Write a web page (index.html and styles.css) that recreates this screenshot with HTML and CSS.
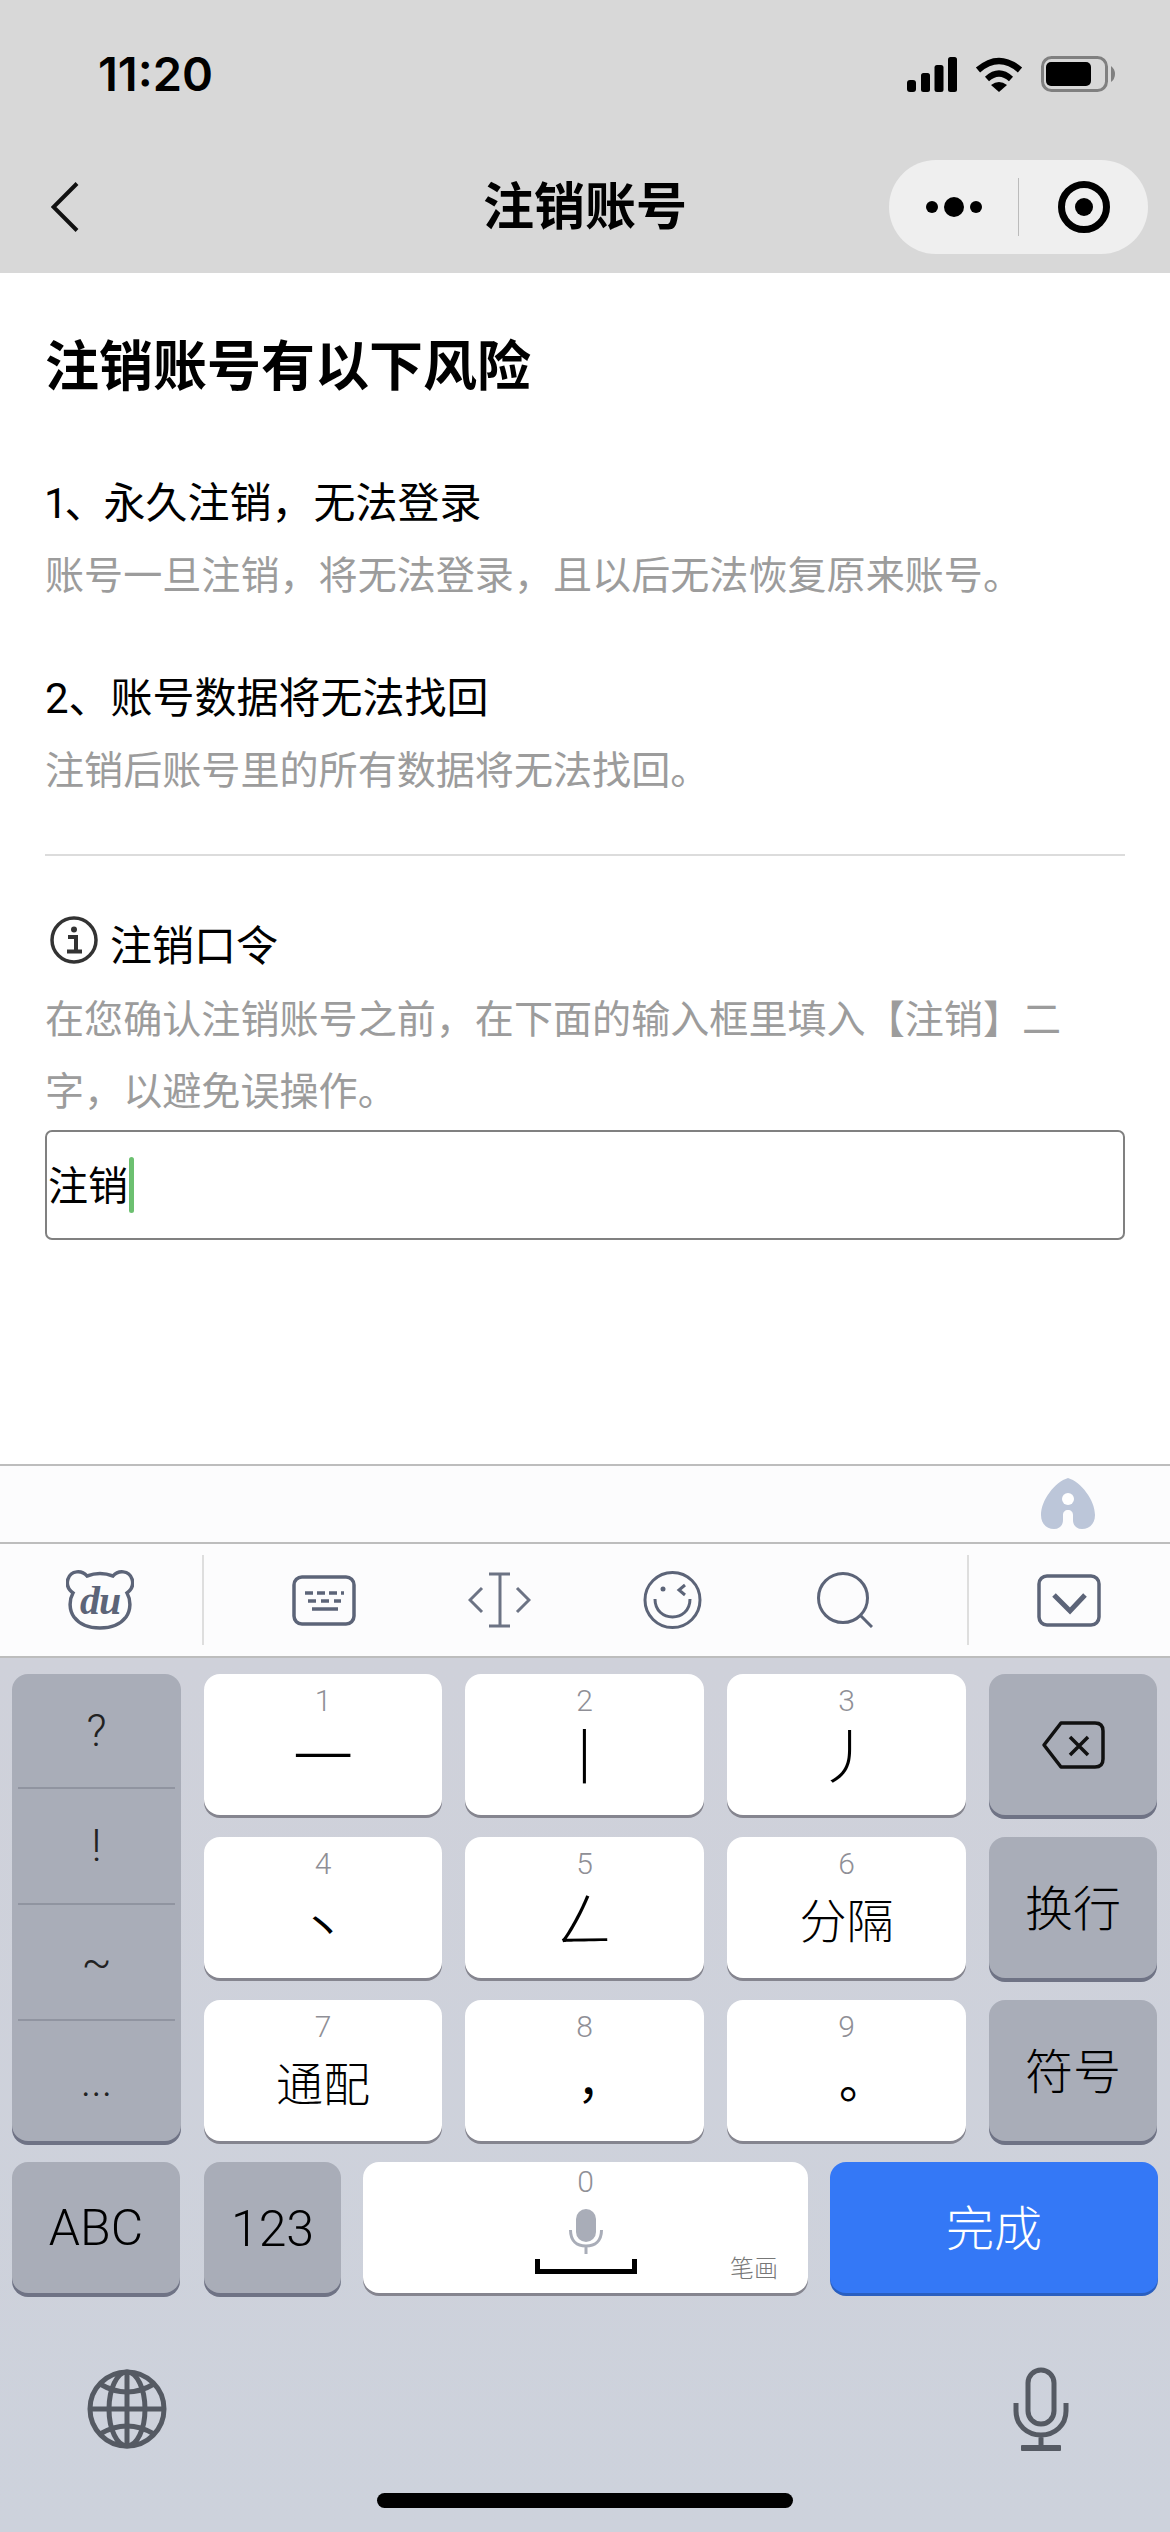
FILE: index.html
```html
<!DOCTYPE html>
<html lang="zh-CN">
<head>
    <meta charset="UTF-8">
    <meta name="viewport" content="width=device-width, initial-scale=1.0">
    <title>注销账号</title>
    <link rel="stylesheet" href="styles.css">
</head>
<body>
    <header class="top">
        <div class="status">
            <span class="time">11:20</span>
            <div class="status-icons">
                <svg width="50" height="35" viewBox="0 0 50 35"><rect x="0" y="23" width="9" height="12" rx="3"/><rect x="14" y="16" width="9" height="19" rx="2.5"/><rect x="27.5" y="8" width="9" height="27" rx="2.5"/><rect x="41" y="0" width="9" height="35" rx="2.5"/></svg>
                <svg width="48" height="36" viewBox="0 0 48 36"><path d="M3 14 Q24 -4 45 14" fill="none" stroke="#000" stroke-width="6.5"/><path d="M12 23 Q24 12 36 23" fill="none" stroke="#000" stroke-width="6"/><path d="M16 29 Q24 23 32 29 L24 36Z"/></svg>
                <svg width="74" height="36" viewBox="0 0 74 36"><rect x="1.5" y="1.5" width="64" height="33" rx="9" fill="none" stroke="#808080" stroke-width="3"/><rect x="5" y="6" width="45" height="24" rx="5"/><path d="M70 10 Q74 13 74 18 Q74 23 70 26Z" fill="#808080"/></svg>
            </div>
        </div>
        <div class="nav">
            <svg class="back" width="28" height="50" viewBox="0 0 28 50"><path d="M26 1.5 L2.5 25 L26 48.5" fill="none" stroke="#111" stroke-width="4"/></svg>
            <div class="nav-title">注销账号</div>
            <div class="capsule">
                <div class="capsule-side">
                    <svg width="56" height="20" viewBox="0 0 56 20"><circle cx="6" cy="10" r="6"/><circle cx="28" cy="10" r="10"/><circle cx="50" cy="10" r="6"/></svg>
                </div>
                <div class="capsule-line"></div>
                <div class="capsule-side">
                    <svg width="52" height="52" viewBox="0 0 52 52"><circle cx="26" cy="26" r="22.5" fill="none" stroke="#000" stroke-width="7"/><circle cx="26" cy="26" r="9"/></svg>
                </div>
            </div>
        </div>
    </header>

    <main>
        <h1>注销账号有以下风险</h1>
        <section class="risk">
            <p class="risk-name"><span class="tight">1、</span>永久注销，无法登录</p>
            <p class="hint">账号一旦注销，将无法登录，且以后无法恢复原来账号。</p>
        </section>
        <section class="risk">
            <p class="risk-name">2、账号数据将无法找回</p>
            <p class="hint">注销后账号里的所有数据将无法找回。</p>
        </section>
        <hr class="divider">
        <div class="pass-title">
            <svg width="48" height="48" viewBox="0 0 48 48"><circle cx="24" cy="24" r="22" fill="none" stroke="#333" stroke-width="3.5"/><circle cx="24" cy="13.5" r="3" fill="#333"/><path d="M18 21 H26 V35 M17 35.5 H32" fill="none" stroke="#333" stroke-width="4"/></svg>
            <span>注销口令</span>
        </div>
        <p class="hint pass-hint">在您确认注销账号之前，在下面的输入框里填入【注销】二字，以避免误操作。</p>
        <div class="input-box">注销<span class="caret"></span></div>
    </main>

    <section class="keyboard">
        <div class="suggest">
            <svg width="54" height="51" viewBox="0 0 54 51"><path d="M27 0 C40 4 54 22 54 37 C54 46 48 51 41 51 C35 51 32 47 32 42 V37 C32 34 30 32 27 32 C24 32 22 34 22 37 V42 C22 47 19 51 13 51 C6 51 0 46 0 37 C0 22 14 4 27 0Z" fill="#bcc6d9"/><circle cx="27" cy="21" r="6" fill="#fff"/></svg>
        </div>
        <div class="tools">
            <svg width="68" height="60" viewBox="0 0 68 60"><path d="M21 6 C16 0 5 0 2 9 C0 15 3 20 7 23 C3 30 3 40 8 47 C14 55 24 58 34 58 C44 58 54 55 60 47 C65 40 65 30 61 23 C65 20 68 15 66 9 C63 0 52 0 47 6 C39 3 29 3 21 6Z" fill="none" stroke="#5c6478" stroke-width="3.5"/><text x="34" y="44" text-anchor="middle" class="du-text">du</text></svg>
            <div class="tool-line line-left"></div>
            <div class="tool-mid">
                <svg width="64" height="51" viewBox="0 0 64 51"><rect x="2" y="2" width="60" height="47" rx="8" fill="none" stroke="#5c6478" stroke-width="3.5"/><path d="M13 18 H21 M25 18 H33 M37 18 H45 M49 18 H52 M16 26 H24 M29 26 H37 M42 26 H49 M20 34 H46" stroke="#5c6478" stroke-width="3.5"/></svg>
                <svg width="63" height="56" viewBox="0 0 63 56"><path d="M21 2 H42 M21 54 H42 M32 2 V54" stroke="#6c7384" stroke-width="3" fill="none"/><path d="M14 16 L2 28 L14 40 M49 16 L61 28 L49 40" stroke="#6c7384" stroke-width="3" fill="none"/></svg>
                <svg width="59" height="58" viewBox="0 0 59 58"><circle cx="29.5" cy="29" r="27.5" fill="none" stroke="#5c6478" stroke-width="3"/><circle cx="20" cy="18" r="2.5" fill="#5c6478"/><path d="M42 14 L36 19 L42 24 M12 28 C12 52 47 52 47 28" fill="none" stroke="#5c6478" stroke-width="3"/></svg>
                <svg class="tool-search" width="56" height="56" viewBox="0 0 56 56"><circle cx="26" cy="26" r="24.5" fill="none" stroke="#5c6478" stroke-width="3"/><path d="M44 44 L55 55" stroke="#5c6478" stroke-width="3"/></svg>
            </div>
            <div class="tool-line"></div>
            <svg class="tool-box" width="64" height="53" viewBox="0 0 64 53"><rect x="2" y="2" width="60" height="49" rx="8" fill="none" stroke="#5c6478" stroke-width="3.5"/><path d="M17 21 L33 37 L48 21" fill="none" stroke="#5c6478" stroke-width="5"/></svg>
        </div>
        <div class="keys">
            <div class="key-grid">
                <div class="key dark side-keys">
                    <span>?</span>
                    <span>!</span>
                    <span>~</span>
                    <span>...</span>
                </div>
                <div class="key num-key"><span class="num">1</span><span class="glyph">一</span></div>
                <div class="key num-key"><span class="num">2</span><span class="glyph">丨</span></div>
                <div class="key num-key"><span class="num">3</span><span class="glyph">丿</span></div>
                <div class="key dark center-key">
                    <svg width="64" height="48" viewBox="0 0 64 48"><path d="M20 2 H54 Q62 2 62 10 V38 Q62 46 54 46 H20 L3 24 Z" fill="none" stroke="#111" stroke-width="3.5" stroke-linejoin="round"/><path d="M29 16 L47 34 M47 16 L29 34" stroke="#111" stroke-width="3.5"/></svg>
                </div>
                <div class="key num-key"><span class="num">4</span><span class="glyph dot">丶</span></div>
                <div class="key num-key"><span class="num">5</span><span class="glyph">ㄥ</span></div>
                <div class="key num-key"><span class="num">6</span><span class="glyph word">分隔</span></div>
                <div class="key dark center-key word-key">换行</div>
                <div class="key num-key"><span class="num">7</span><span class="glyph word">通配</span></div>
                <div class="key num-key"><span class="num">8</span><span class="glyph word punct">，</span></div>
                <div class="key num-key"><span class="num">9</span><span class="glyph word punct">。</span></div>
                <div class="key dark center-key word-key">符号</div>
            </div>
            <div class="key-row">
                <div class="key dark center-key latin abc">ABC</div>
                <div class="key dark center-key latin n123">123</div>
                <div class="key space">
                    <span class="num">0</span>
                    <svg class="space-mic" width="34" height="45" viewBox="0 0 34 45"><rect x="7" y="0" width="20" height="33" rx="10" fill="#a9adb8"/><path d="M1.5 21 C1.5 32 8 37 17 37 C26 37 32.5 32 32.5 21 M17 37 V45" fill="none" stroke="#a9adb8" stroke-width="3"/></svg>
                    <svg class="space-mark" width="102" height="15" viewBox="0 0 102 15"><path d="M2.5 0 V12.5 H99.5 V0" fill="none" stroke="#000" stroke-width="5"/></svg>
                    <span class="stroke-label">笔画</span>
                </div>
                <div class="key done center-key word-key">完成</div>
            </div>
            <div class="sys-row">
                <svg width="80" height="80" viewBox="0 0 80 80"><g fill="none" stroke="#555a63" stroke-width="5"><circle cx="40" cy="40" r="37"/><ellipse cx="40" cy="40" rx="18" ry="37"/><path d="M40 3 V77 M3 40 H77"/><path d="M13 15 Q40 31 67 15 M13 65 Q40 49 67 65"/></g></svg>
                <svg width="56" height="84" viewBox="0 0 56 84"><g fill="none" stroke="#555a63" stroke-width="5"><rect x="15" y="3" width="26" height="54" rx="13"/><path d="M3 36 V44 C3 58 14 68 28 68 C42 68 53 58 53 44 V36 M28 68 V80"/></g><rect x="8" y="78" width="40" height="6" rx="1" fill="#555a63"/></svg>
            </div>
            <div class="home-bar"></div>
        </div>
    </section>
</body>
</html>
```

FILE: styles.css
```css
* {
    box-sizing: border-box;
}
body {
    margin: 0;
    width: 1170px;
    height: 2532px;
    display: flex;
    flex-direction: column;
    background-color: #fff;
    color: #000;
    font-family: Roboto, "Noto Sans CJK SC", sans-serif;
    overflow: hidden;
}
svg {
    display: block;
    flex: none;
}

/* top bar */
.top {
    height: 273px;
    flex: none;
    background-color: #d8d8d8;
}
.status {
    height: 148px;
    padding: 50px 55px 0 98px;
    display: flex;
    justify-content: space-between;
    align-items: flex-start;
}
.time {
    font-family: Inter, sans-serif;
    font-size: 47px;
    font-weight: 600;
    line-height: 48px;
}
.status-icons {
    display: flex;
    align-items: center;
    gap: 18px;
    margin-top: 6px;
}
.nav {
    height: 125px;
    padding: 12px 22px 0;
    display: grid;
    grid-template-columns: 1fr auto 1fr;
    align-items: start;
}
.back {
    margin: 22px 0 0 29px;
}
.nav-title {
    font-size: 51px;
    font-weight: 700;
    line-height: 96px;
}
.capsule {
    justify-self: end;
    width: 259px;
    height: 94px;
    border-radius: 47px;
    background-color: #efefef;
    display: flex;
    align-items: center;
}
.capsule-side {
    flex: 1;
    display: flex;
    justify-content: center;
}
.capsule-line {
    width: 1px;
    height: 58px;
    background-color: #bbb;
}

/* content */
main {
    flex: 1;
    padding: 65px 45px 0;
}
h1 {
    margin: 0 0 70px;
    font-size: 54px;
    font-weight: 700;
    line-height: 60px;
}
p {
    margin: 0;
}
.risk {
    margin-bottom: 51px;
}
.risk-name {
    font-size: 42px;
    line-height: 72px;
}
.tight {
    margin-left: -1px;
    letter-spacing: -3px;
}
.hint {
    font-size: 39.1px;
    line-height: 72px;
    color: #9c9c9c;
}
.divider {
    margin: -4px 0 55px;
    border: none;
    height: 2px;
    background-color: #dcdcdc;
}
.pass-title {
    display: flex;
    align-items: flex-start;
    gap: 12px;
    padding-left: 5px;
    font-size: 42px;
    line-height: 72px;
}
.pass-title svg {
    margin-top: 5px;
}
.pass-hint {
    padding: 1px 0 2px;
}
.input-box {
    height: 110px;
    padding: 0 0 4px 1px;
    display: flex;
    align-items: center;
    border: 2px solid #808080;
    border-radius: 7px;
    font-size: 40px;
}
.caret {
    width: 5px;
    height: 56px;
    margin: 3px 0 0 1px;
    border-radius: 3px;
    background-color: #6cc070;
}

/* keyboard */
.keyboard {
    height: 1068px;
    flex: none;
    display: flex;
    flex-direction: column;
}
.suggest {
    height: 78px;
    padding: 12px 75px 0 0;
    display: flex;
    justify-content: flex-end;
    border-top: 2px solid #bdbdbd;
    background-color: #fcfcfd;
}
.tools {
    height: 116px;
    padding: 0 69px 0 66px;
    display: flex;
    align-items: center;
    border-top: 2px solid #bdbdbd;
    border-bottom: 2px solid #bdbdbd;
    background-color: #fcfcfd;
}
.du-text {
    font-family: "Liberation Serif", serif;
    font-size: 40px;
    font-style: italic;
    font-weight: 700;
    letter-spacing: -1px;
    fill: #5c6478;
}
.tool-line {
    width: 2px;
    height: 90px;
    background-color: #dedede;
}
.line-left {
    margin-left: 68px;
}
.tool-mid {
    flex: 1;
    margin: 0 0 0 88px;
    display: flex;
    align-items: center;
    gap: 112px;
}
.tool-search {
    margin-left: 3px;
}
.tool-box {
    margin-left: 68px;
}
.keys {
    flex: 1;
    padding: 16px 12px 0;
    background: linear-gradient(#cfd1da, #cdd2dc);
}
.key-grid {
    display: grid;
    grid-template-columns: 169px 238px 239px 239px 168px;
    grid-template-rows: 141px 141px 141px;
    column-gap: 23px;
    row-gap: 22px;
}
.key {
    border-radius: 16px;
    background-color: #fff;
    box-shadow: 0 3px 0 #85858f;
}
.dark {
    background-color: #a9adb8;
    box-shadow: 0 4px 0 #6f7385;
}
.side-keys {
    grid-row: 1 / 4;
    display: grid;
    grid-template-rows: 115px 116px 116px 1fr;
    padding: 0 6px;
    font-size: 44px;
    font-weight: 300;
    color: #222;
}
.side-keys span {
    display: flex;
    align-items: center;
    justify-content: center;
    border-bottom: 2px solid #9094a0;
}
.side-keys span:last-child {
    border-bottom: none;
}
.num-key {
    padding-top: 8px;
    display: flex;
    flex-direction: column;
    align-items: center;
}
.num {
    font-size: 30px;
    font-weight: 300;
    line-height: 38px;
    color: #8f8f96;
}
.glyph {
    font-size: 60px;
    font-weight: 300;
    line-height: 78px;
}
.dot {
    font-size: 44px;
    font-weight: 400;
    line-height: 92px;
}
.word {
    font-size: 47px;
}
.punct {
    margin: -3px 0 0 32px;
    font-weight: 400;
}
.center-key {
    display: flex;
    align-items: center;
    justify-content: center;
}
.word-key {
    padding-bottom: 5px;
    font-size: 48px;
    font-weight: 300;
}
.latin {
    font-size: 50px;
    font-weight: 300;
}
.key-row {
    margin-top: 21px;
    height: 131px;
    display: flex;
    gap: 22px;
}
.abc {
    width: 168px;
    margin-right: 2px;
}
.n123 {
    width: 137px;
    padding-top: 2px;
}
.space {
    flex: 1;
    position: relative;
    padding-top: 1px;
    display: flex;
    flex-direction: column;
    align-items: center;
}
.space-mic {
    margin-top: 8px;
}
.space-mark {
    margin-top: 5px;
}
.stroke-label {
    position: absolute;
    right: 30px;
    top: 87px;
    font-size: 24px;
    font-weight: 300;
    color: #777;
}
.done {
    width: 328px;
    background-color: #3478f6;
    box-shadow: 0 3px 0 #2a5fc0;
    color: #fff;
}
.sys-row {
    margin-top: 74px;
    padding: 0 89px 0 75px;
    display: flex;
    justify-content: space-between;
    align-items: center;
}
.home-bar {
    width: 416px;
    height: 15px;
    margin: 42px auto 0;
    border-radius: 8px;
    background-color: #000;
}
```
